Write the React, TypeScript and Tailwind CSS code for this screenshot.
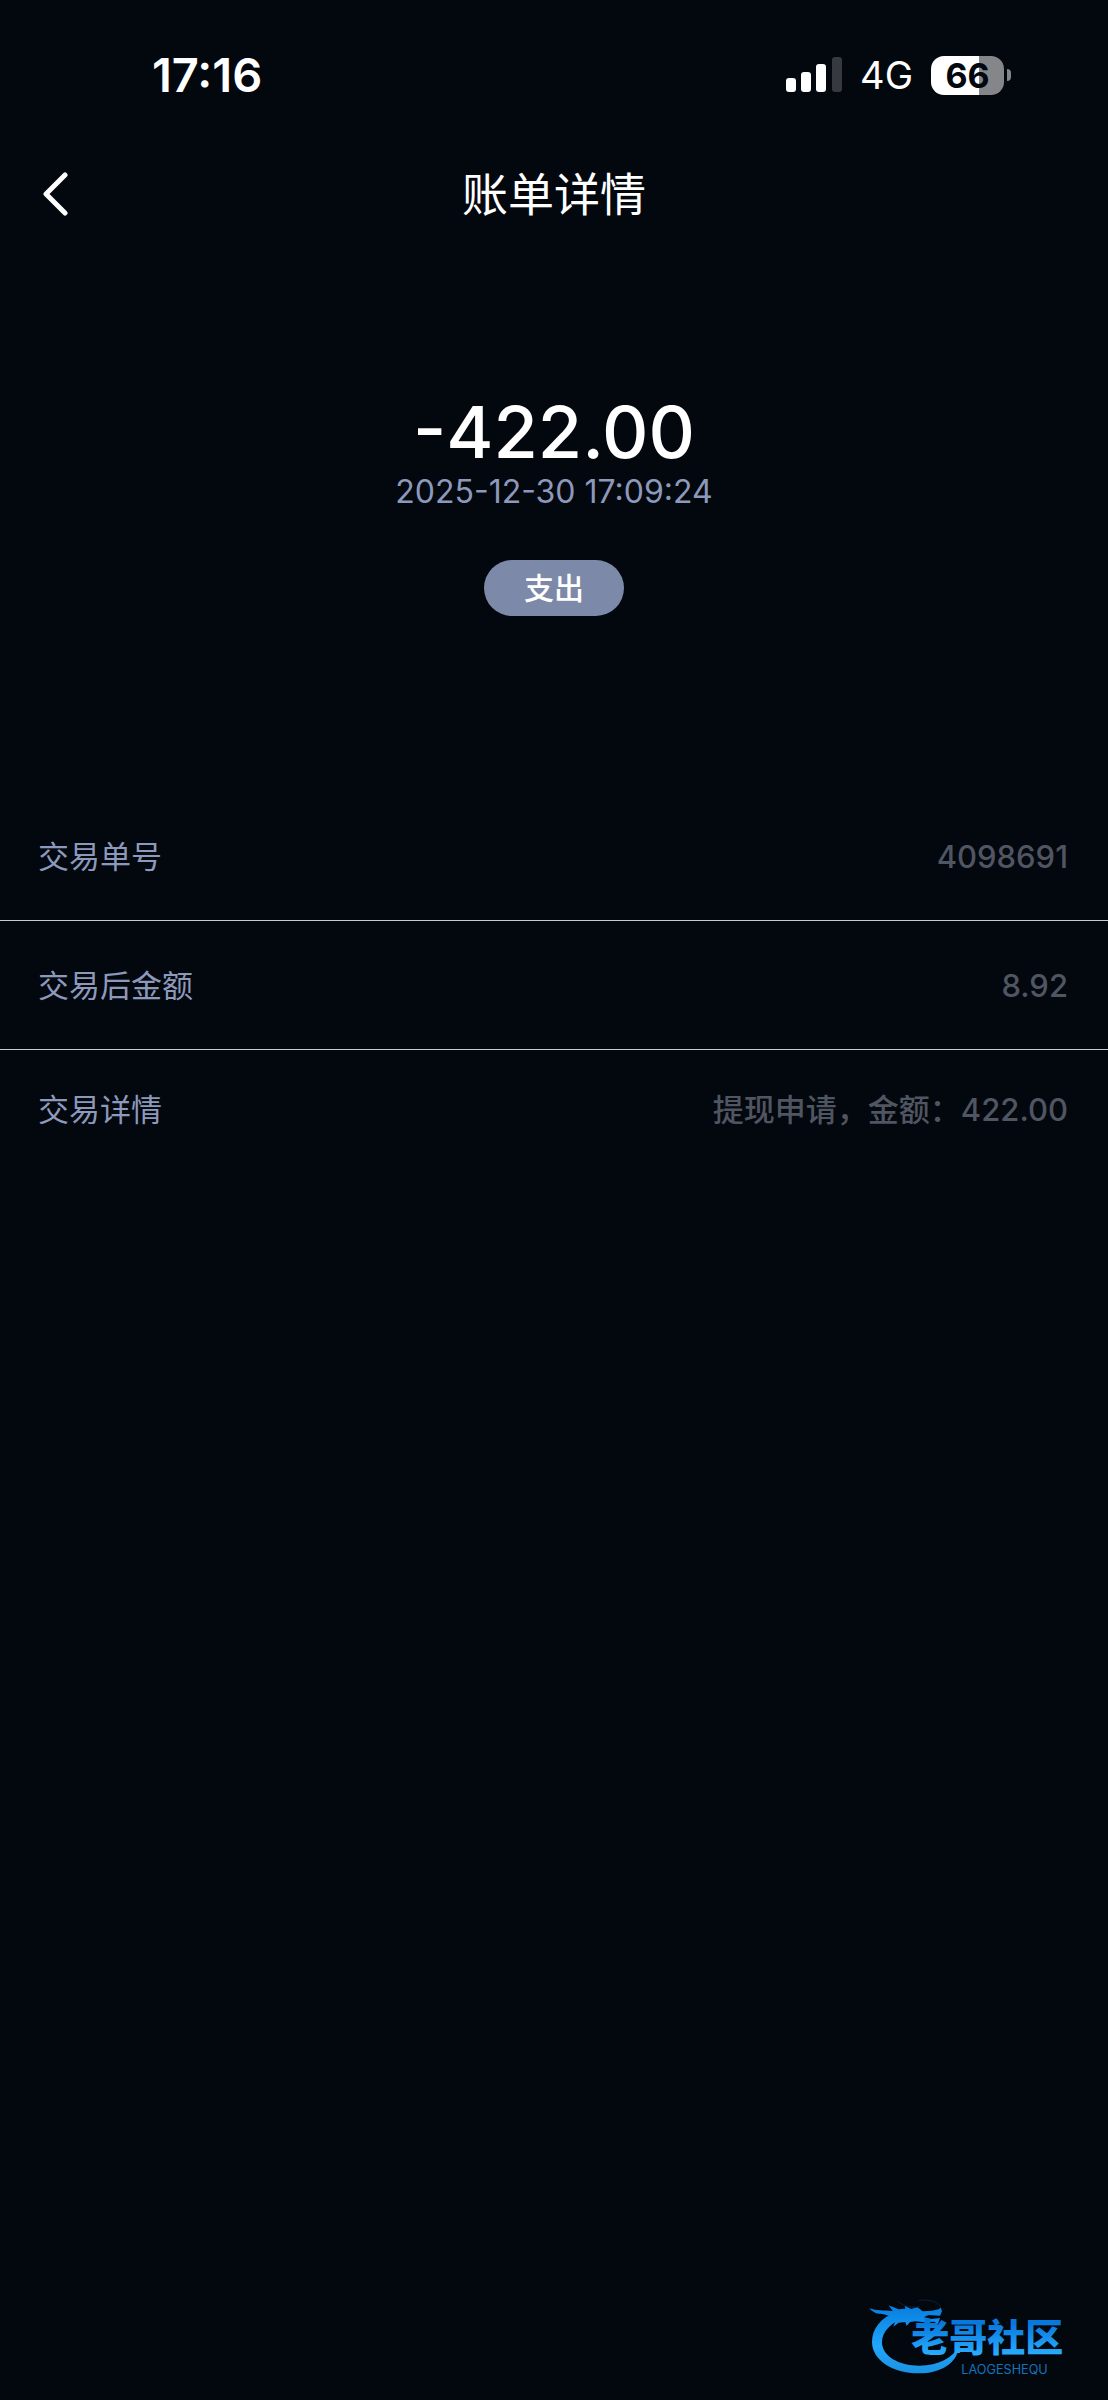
const rows = [
  { label: '交易单号', value: '4098691' },
  { label: '交易后金额', value: '8.92' },
  { label: '交易详情', value: '提现申请，金额：422.00' },
];

function StatusBar() {
  return (
    <div className="flex h-[150px] items-center justify-between pr-[97px] pl-[152px]">
      <span className="text-[47px] leading-[48px] font-semibold">17:16</span>
      <div className="flex items-center">
        <svg width="58" height="36" viewBox="0 0 58 36" fill="#fff" aria-hidden="true">
          <rect x="0" y="21" width="10" height="14" rx="3" />
          <rect x="15" y="15" width="10" height="20" rx="3" />
          <rect x="30" y="7" width="10" height="28" rx="3" />
          <rect x="46" y="0" width="10" height="35" rx="3" fill="#36393e" />
        </svg>
        <span className="ml-4 text-[38px] leading-[48px]">4G</span>
        <div className="ml-[18px] flex items-center gap-[3px]">
          <div className="flex h-[39px] w-[73px] items-center justify-center rounded-[13px] bg-linear-to-r from-white from-66% to-[#85868a] to-66% text-[34px] leading-[39px] font-bold text-[#03070e]">
            66
          </div>
          <div className="h-3 w-1 rounded-r-full bg-[#85868a]" />
        </div>
      </div>
    </div>
  );
}

function Header() {
  return (
    <header className="grid h-[88px] grid-cols-[1fr_auto_1fr] items-center px-10">
      <button type="button" aria-label="返回" className="w-8">
        <svg width="32" height="44" viewBox="0 0 32 44" fill="none" aria-hidden="true">
          <path
            d="M25 3 6 22l19 19"
            stroke="#fff"
            strokeWidth="5"
            strokeLinecap="round"
            strokeLinejoin="round"
          />
        </svg>
      </button>
      <h1 className="text-[46px] leading-[60px]">账单详情</h1>
    </header>
  );
}

function Logo() {
  return (
    <svg width="248" height="110" viewBox="0 0 744 330" role="img" aria-label="老哥社区">
      <defs>
        <linearGradient id="ring" x1="0" y1="50" x2="0" y2="250" gradientUnits="userSpaceOnUse">
          <stop offset="0" stopColor="#087fe0" />
          <stop offset="0.6" stopColor="#22a5fa" />
          <stop offset="1" stopColor="#1b92e4" />
        </linearGradient>
        <linearGradient id="name" x1="0" y1="100" x2="0" y2="200" gradientUnits="userSpaceOnUse">
          <stop offset="0" stopColor="#0878dc" />
          <stop offset="1" stopColor="#2bb0ff" />
        </linearGradient>
      </defs>
      <g fill="url(#ring)">
        <path d="M108 66C62 84 36 116 36 156c0 54 62 94 140 94 66 0 116-30 120-80-18 32-60 57-118 57-62 0-112-28-112-70 0-34 28-60 74-77Z" />
        <path d="M28 55c22 8 44 6 70 8l-12-17 30 12 20-2-2-9 20 10 18-6 16 13 28-2 22-5 4-5 4 12-6 13-34-2-14 6 20 6 28-3-6 18-12-7-28 2-28-3-16 2-10 12-4-12-20 2-16 12 6-16-16 1 8-14-26-8C74 72 44 76 28 55Z" />
      </g>
      <path
        d="M112 34c20 16 46 20 66 16M176 32c30-6 66 4 66 22"
        fill="none"
        stroke="#0b2138"
        strokeWidth="3"
      />
      <text
        x="154"
        y="182"
        fontSize="114"
        fontFamily="'Noto Sans CJK SC', sans-serif"
        fontWeight="900"
        fill="url(#name)"
      >
        老哥社区
      </text>
      <text x="304" y="251" fontSize="38" fontFamily="Inter, sans-serif" fill="#1474b8">
        LAOGESHEQU
      </text>
    </svg>
  );
}

export default function App() {
  return (
    <div className="flex min-h-screen flex-col bg-[#03070e] font-[Inter,'Noto_Sans_CJK_SC',sans-serif] text-white">
      <StatusBar />
      <Header />

      <main>
        <section className="flex flex-col items-center pt-[154px] pb-[176px]">
          <p className="text-[72px] leading-20 font-medium">-422.00</p>
          <p className="text-[32px] leading-10 text-[#8d99bb]">2025-12-30 17:09:24</p>
          <span className="mt-12 rounded-full bg-[#7c89a8] px-10 text-[30px] leading-14 font-medium">
            支出
          </span>
        </section>

        <dl className="text-[31px] leading-10">
          {rows.map((row) => (
            <div
              key={row.label}
              className="flex justify-between border-b border-[#c8cccd] pt-[45px] pr-10 pb-[43px] pl-[38px] last:border-0 last:py-10"
            >
              <dt className="text-[#8d99bb]">{row.label}</dt>
              <dd className="font-medium text-[#505562]">{row.value}</dd>
            </div>
          ))}
        </dl>
      </main>

      <div className="mt-auto flex justify-end">
        <Logo />
      </div>
    </div>
  );
}
